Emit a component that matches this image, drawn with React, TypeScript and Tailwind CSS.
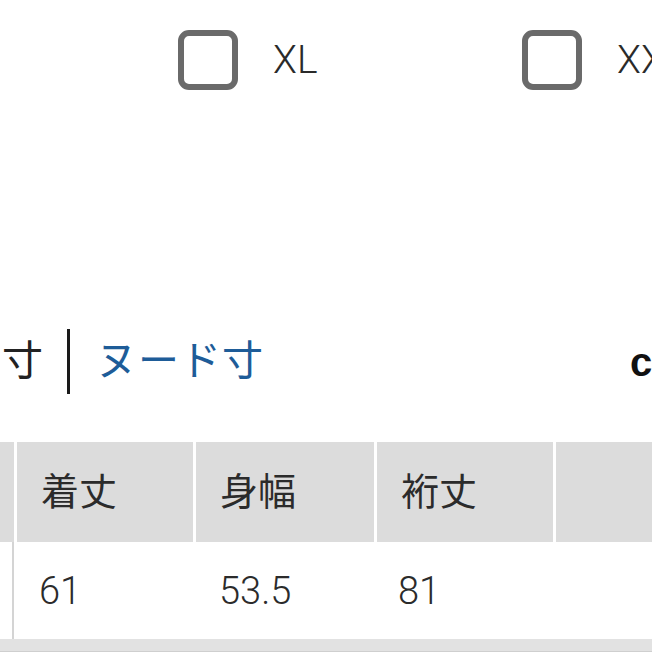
import React from "react";

function Check({ label }: { label: string }) {
  return (
    <div className="flex w-[344px] shrink-0 items-center">
      <div className="h-[60px] w-[60px] shrink-0 rounded-[11px] border-[6px] border-[#6a6a6a] bg-white" />
      <span className="ml-[35px] whitespace-nowrap text-[39px] font-light leading-none text-[#2a2a2a]">
        {label}
      </span>
    </div>
  );
}

export default function App() {
  const heads = ["", "着丈", "身幅", "裄丈", ""];
  const vals = ["", "61", "53.5", "81", ""];
  return (
    <div
      className="relative h-[652px] w-[652px] overflow-hidden bg-white"
      style={{ fontFamily: "Roboto, 'Noto Sans CJK JP', sans-serif" }}
    >
      <div className="flex pl-[178px] pt-[30px]">
        <Check label="XL" />
        <Check label="XXL" />
      </div>

      <div className="mt-[239px] flex h-[65px] w-[900px] items-center whitespace-nowrap">
        <span className="ml-[2px] shrink-0 text-[41px] leading-none text-[#222]">寸</span>
        <div className="ml-[24px] h-[65px] w-[3px] shrink-0 bg-[#1a1a1a]" />
        <span className="ml-[26px] shrink-0 text-[41px] leading-none tracking-[1px] text-[#1e5c98]">
          ヌード寸
        </span>
        <span
          className="ml-[366px] shrink-0 text-[40px] font-bold leading-none text-[#111]"
          style={{ fontFamily: "'Liberation Sans', Arial, sans-serif" }}
        >
          cm
        </span>
      </div>

      <div className="mt-[48px] ml-[-164px] w-[900px]">
        <div className="flex h-[100px] gap-[3px] bg-white">
          {heads.map((h, i) => (
            <div
              key={i}
              className={`flex shrink-0 items-center bg-[#dcdcdc] pl-[24px] text-[38px] leading-none text-[#2b2b2b] ${
                i === 0 ? "w-[178px]" : i === 2 ? "w-[178px]" : "w-[176px]"
              }`}
            >
              {h}
            </div>
          ))}
        </div>
        <div className="flex h-[97px] bg-white">
          {vals.map((v, i) => (
            <div
              key={i}
              className={`flex shrink-0 items-center text-[38px] font-light leading-none text-[#2b2b2b] ${
                i === 0
                  ? "w-[178px] border-r-[2px] border-[#d4d4d4]"
                  : i === 1
                  ? "w-[177px] pl-[25px]"
                  : i === 2
                  ? "w-[181px] pl-[28px]"
                  : "w-[179px] pl-[26px]"
              }`}
            >
              {v}
            </div>
          ))}
        </div>
        <div className="h-[14px] border-b-[2px] border-[#cfcfcf] bg-[#e2e2e2]" />
      </div>
    </div>
  );
}
